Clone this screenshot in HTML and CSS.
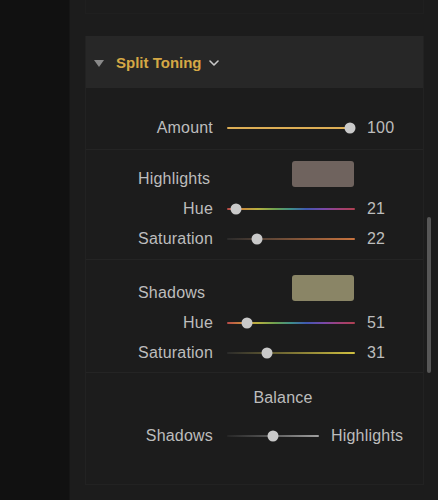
FILE: index.html
```html
<!DOCTYPE html>
<html lang="en">
<head>
  <meta charset="UTF-8">
  <meta name="viewport" content="width=device-width, initial-scale=1.0">
  <title>Split Toning</title>
  <link rel="stylesheet" href="styles.css">
</head>
<body>
  <div class="app">
    <aside class="sidebar"></aside>

    <main class="panel">
      <div class="prev-card"></div>

      <section class="card">
        <header class="card-head">
          <span class="caret"></span>
          <h2>Split Toning</h2>
          <svg class="chevron" width="10" height="6" viewBox="0 0 10 6">
            <path d="M1 1 L5 5 L9 1" fill="none" stroke="#c8c8c8" stroke-width="1.6" stroke-linecap="round" stroke-linejoin="round"/>
          </svg>
        </header>

        <div class="group amount">
          <div class="row">
            <span class="label">Amount</span>
            <div class="slider gold"><span class="thumb" style="--p: 1"></span></div>
            <span class="value">100</span>
          </div>
        </div>

        <div class="group highlights">
          <div class="row tone-head">
            <span class="tone-name">Highlights</span>
            <span class="swatch hl"></span>
          </div>
          <div class="row">
            <span class="label">Hue</span>
            <div class="slider hue"><span class="thumb" style="--p: 0.035"></span></div>
            <span class="value">21</span>
          </div>
          <div class="row">
            <span class="label">Saturation</span>
            <div class="slider sat-orange"><span class="thumb" style="--p: 0.21"></span></div>
            <span class="value">22</span>
          </div>
        </div>

        <div class="group shadows">
          <div class="row tone-head">
            <span class="tone-name">Shadows</span>
            <span class="swatch sh"></span>
          </div>
          <div class="row">
            <span class="label">Hue</span>
            <div class="slider hue"><span class="thumb" style="--p: 0.13"></span></div>
            <span class="value">51</span>
          </div>
          <div class="row">
            <span class="label">Saturation</span>
            <div class="slider sat-yellow"><span class="thumb" style="--p: 0.3"></span></div>
            <span class="value">31</span>
          </div>
        </div>

        <div class="group balance">
          <p class="balance-title">Balance</p>
          <div class="row balance-row">
            <span class="label">Shadows</span>
            <div class="slider grey"><span class="thumb" style="--p: 0.5"></span></div>
            <span class="value">Highlights</span>
          </div>
        </div>
      </section>

      <div class="scrollbar"></div>
    </main>
  </div>
</body>
</html>
```

FILE: styles.css
```css
* {
  margin: 0;
  padding: 0;
  box-sizing: border-box;
}

body {
  background: #111;
  font-family: "Liberation Sans", Arial, Helvetica, sans-serif;
  color: #bdbdbd;
  font-size: 16px;
  letter-spacing: 0.2px;
}

.app {
  display: flex;
  height: 500px;
  overflow: hidden;
}

.sidebar {
  width: 70px;
  background: #111;
  border-right: 1px solid #161616;
}

.panel {
  position: relative;
  flex: 1;
  background: #1c1c1c;
  padding: 0 14px 0 15px;
}

.prev-card {
  height: 14px;
  border: 1px solid #1f1f1f;
  border-top: none;
  margin-bottom: 22px;
}

.card {
  width: 339px;
  border: 1px solid #222;
  border-top: none;
  background: #1c1c1c;
}

.card-head {
  display: flex;
  align-items: center;
  height: 52px;
  background: #272727;
  padding-left: 8px;
  letter-spacing: 0;
}

.caret {
  width: 0;
  height: 0;
  border-left: 5.5px solid transparent;
  border-right: 5.5px solid transparent;
  border-top: 7px solid #8a8a8a;
  margin-right: 12px;
  margin-top: 2px;
}

.card-head h2 {
  font-size: 15px;
  font-weight: bold;
  color: #d5a845;
}

.chevron {
  margin-left: 7px;
  margin-top: 2px;
}

.group {
  border-bottom: 1px solid #242424;
}

.group:last-child {
  border-bottom: none;
}

.row {
  display: grid;
  grid-template-columns: 127px 128px 1fr;
  column-gap: 14px;
  align-items: center;
  height: 30px;
}

.label {
  text-align: right;
}

.value {
  margin-left: -2px;
}

.amount {
  padding: 25px 0 6px;
}

.highlights {
  padding: 14px 0 5px;
}

.shadows {
  padding: 18px 0 4px;
}

.tone-name {
  padding-left: 52px;
  text-align: left;
}

.swatch {
  justify-self: end;
  align-self: start;
  width: 62px;
  height: 26px;
  border-radius: 3px;
  margin-top: -3px;
  margin-right: 1px;
}

.swatch.hl {
  background: #6f635e;
}

.swatch.sh {
  background: #8a8566;
}

.slider {
  position: relative;
  height: 2px;
  border-radius: 1px;
}

.thumb {
  position: absolute;
  top: 50%;
  left: calc(5px + (100% - 10px) * var(--p));
  width: 11px;
  height: 11px;
  border-radius: 50%;
  background: #c9c9c9;
  transform: translate(-50%, -50%);
}

.gold {
  background: #dcae55;
}

.hue {
  background: linear-gradient(90deg, #b84848, #c88a3c 12%, #b8b040 24%, #6ca050 38%, #3f8f8a 50%, #4058b0 62%, #7a48a8 76%, #a04078 88%, #b04050);
}

.sat-orange {
  background: linear-gradient(90deg, #2a2a2a, #5a4436 30%, #c8733e);
}

.sat-yellow {
  background: linear-gradient(90deg, #2a2a2a, #5a5430 30%, #d0c040);
}

.grey {
  background: linear-gradient(90deg, #262626, #555 45%, #a0a0a0);
}

.balance {
  padding: 15px 0 33px;
}

.balance-title {
  height: 20px;
  line-height: 20px;
  text-align: center;
  padding-left: 57px;
  margin-bottom: 13px;
}

.balance-row {
  grid-template-columns: 127px 92px auto;
}

.scrollbar {
  position: absolute;
  top: 217px;
  left: 357px;
  width: 4px;
  height: 156px;
  border-radius: 2px;
  background: #575757;
}
```
